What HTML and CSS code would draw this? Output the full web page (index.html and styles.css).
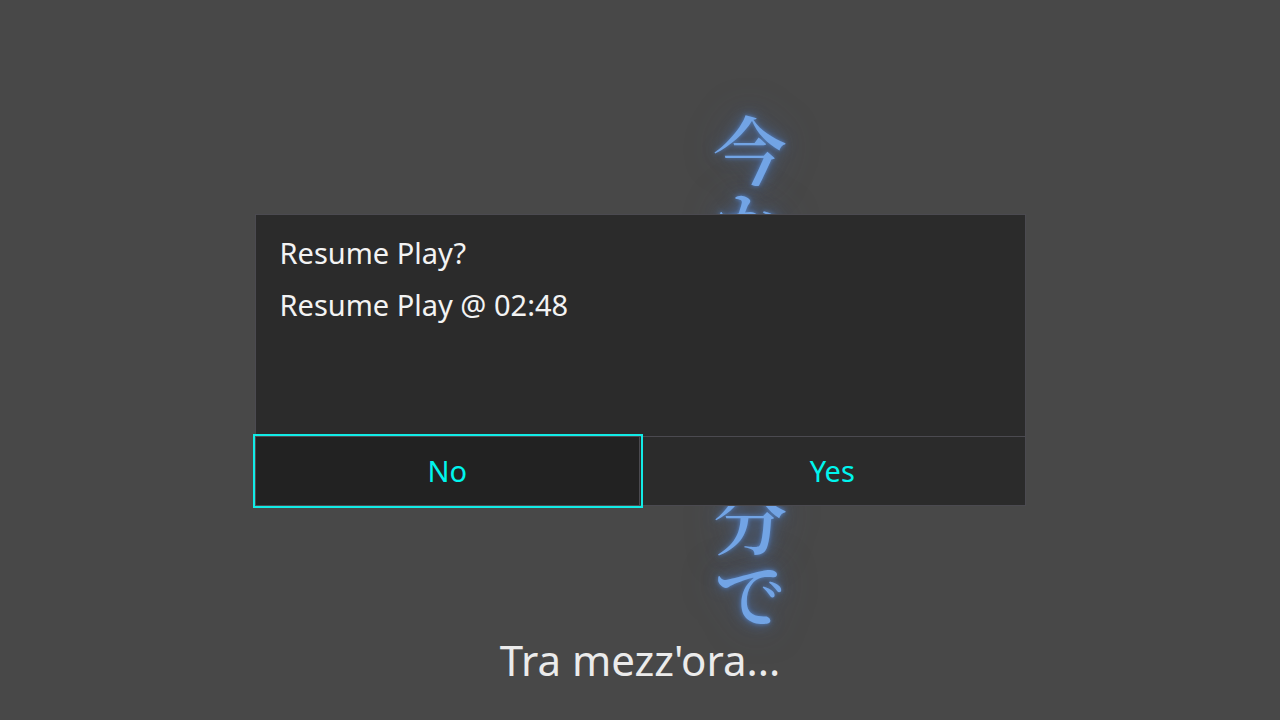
FILE: index.html
```html
<!DOCTYPE html>
<html lang="en">
<head>
<meta charset="utf-8">
<title>Resume Play?</title>
<link rel="stylesheet" href="styles.css">
</head>
<body>
<main class="player">
  <p class="caption" lang="ja">今から三十分で</p>
  <section class="dialog" role="dialog" aria-labelledby="dialog-title">
    <div class="message">
      <h1 class="line" id="dialog-title">Resume Play?</h1>
      <p class="line">Resume Play @ 02:48</p>
    </div>
    <div class="actions">
      <button class="action selected" type="button">No</button>
      <button class="action" type="button">Yes</button>
    </div>
  </section>
  <p class="subtitle" lang="it">Tra mezz'ora...</p>
</main>
</body>
</html>
```
FILE: styles.css
```css
* { box-sizing: border-box; }

body {
  margin: 0;
  background: #484848;
  font-family: "Noto Sans", sans-serif;
}

.player {
  position: relative;
  display: grid;
  place-items: center;
  min-height: 100vh;
  overflow: hidden;
}

.caption {
  position: absolute;
  top: 114px;
  left: calc(50% + 73px);
  margin: 0;
  writing-mode: vertical-rl;
  font-family: "Noto Serif CJK JP", "Noto Sans CJK JP", serif;
  font-size: 74px;
  font-weight: 600;
  line-height: 74px;
  white-space: nowrap;
  color: #72a4e5;
  text-shadow: 0 0 4px #5484c8, 0 0 14px rgba(75, 120, 195, 0.7), 0 0 36px rgba(75, 105, 160, 0.5);
}

.dialog {
  position: relative;
  width: calc(60% + 3px);
  border: 1px solid #4b4a50;
  background: #2b2b2b;
  color: #f3f3f3;
}

.message {
  min-height: 221px;
  padding: 12px 24px;
}

.line {
  margin: 0;
  font-size: 29px;
  font-weight: 400;
  line-height: 52px;
}

.actions {
  display: grid;
  grid-template-columns: 1fr 1fr;
  border-top: 1px solid #4b4a50;
}

.action {
  position: relative;
  height: 68px;
  padding: 0;
  border: 0;
  background: #2b2b2b;
  color: #00f5ee;
  font: inherit;
  font-size: 29px;
  line-height: 68px;
}

.selected {
  z-index: 1;
  border-right: 1px solid #4b4a50;
  background: #222;
  outline: 2px solid #12ebe6;
  outline-offset: 1px;
}

.subtitle {
  position: absolute;
  bottom: 30px;
  left: 0;
  width: 100%;
  margin: 0;
  font-size: 42px;
  line-height: 60px;
  text-align: center;
  color: #ebebeb;
}
```
